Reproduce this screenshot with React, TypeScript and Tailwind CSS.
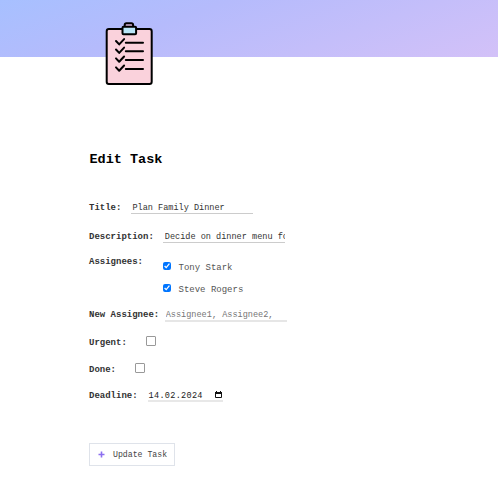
import React from 'react';

const label = 'shrink-0 whitespace-pre text-[9px] leading-[12px] font-bold text-[#333]';
const people = ['Tony Stark', 'Steve Rogers'];

function Clipboard() {
  return (
    <svg className="block h-[64px] w-[48px]" viewBox="0 0 48 64" fill="none" stroke="#000" strokeWidth="2" strokeLinecap="round" strokeLinejoin="round">
      <rect x="1.7" y="7" width="45" height="55" rx="2.2" fill="#fad2dc" />
      <path d="M19.7 5V3Q19.7 1.3 21.4 1.3H26.4Q28.1 1.3 28.1 3V5" fill="#d9b4d8" />
      <rect x="17.5" y="4.8" width="13.6" height="7.4" rx="1" fill="#b9e6f8" />
      {[0, 8.5, 17.4, 26.4].map((y) => (
        <path key={y} d={`M11 ${19 + y}l3.2 3.4 4.9-5.3M20.8 ${20.7 + y}H38`} />
      ))}
    </svg>
  );
}

export default function App() {
  return (
    <div className="h-[504px] w-[498px] overflow-hidden bg-white font-['Liberation_Mono','Courier_New',monospace]">
      <header className="h-[57px] bg-[linear-gradient(160deg,#a7c0ff_0%,#b5bbfc_35%,#d3c1f8_100%)] pt-[22px] pl-[105px]">
        <Clipboard />
      </header>
      <main className="pt-[95px] pl-[89px]">
        <h1 className="h-[16px] pl-[0.5px] text-[13.5px] leading-[16px] font-bold text-black">Edit Task</h1>
        <form>
          <div className="mt-[34px] flex h-[14px]">
            <label className={label}>Title:</label>
            <input className="ml-[9.5px] h-[12px] w-[122px] border-b border-[#ccc] pl-[1.5px] text-[8.55px] leading-[11px] text-[#333]" defaultValue="Plan Family Dinner" />
          </div>
          <div className="mt-[15px] flex h-[14px]">
            <label className={label}>Description:</label>
            <input className="ml-[9.5px] h-[12px] w-[122px] border-b border-[#ccc] pl-[1.5px] text-[8.55px] leading-[11px] text-[#333]" defaultValue="Decide on dinner menu for the family" />
          </div>
          <div className="mt-[11px] flex h-[41px]">
            <label className={label}>Assignees:</label>
            <div className="ml-[20px] flex flex-col gap-[10px] pt-[6px]">
              {people.map((p) => (
                <div key={p} className="flex h-[12px] text-[9px] leading-[12px] text-[#555]">
                  <input type="checkbox" defaultChecked className="m-0 h-[8px] w-[8px] accent-[#0075ff]" />
                  <span className="ml-[7.5px]">{p}</span>
                </div>
              ))}
            </div>
          </div>
          <div className="mt-[12px] flex h-[14px]">
            <label className={label}>New Assignee:</label>
            <input className="ml-[6px] h-[13px] w-[122px] border-b-2 border-[#e6e6e6] pl-[0.5px] text-[8.55px] leading-[11px] placeholder:text-[#757575]" placeholder="Assignee1, Assignee2," />
          </div>
          <div className="mt-[14px] flex h-[14px]">
            <label className={label}>Urgent:</label>
            <span className="ml-[19px] mt-[-1px] h-[10px] w-[10px] rounded-[1px] border border-[#999] bg-white" />
          </div>
          <div className="mt-[13px] flex h-[14px]">
            <label className={label}>Done:</label>
            <span className="ml-[19px] mt-[-1px] h-[10px] w-[10px] rounded-[1px] border border-[#999] bg-white" />
          </div>
          <div className="mt-[12px] flex h-[14px]">
            <label className={label}>Deadline:</label>
            <div className="ml-[10.5px] flex h-[12px] w-[75px] justify-between border-b-2 border-[#e8e8e8] pr-[1px] pl-[0.5px] text-[8.55px] leading-[12px] tracking-[0.28px] text-[#222]">
              <span>14.02.2024</span>
              <svg className="mt-[1px] h-[8px] w-[7px]" viewBox="0 0 7 8">
                <path d="M.5 1.5H6.5V6.5H.5Z" fill="none" stroke="#111" />
                <path d="M0 1H7V3H0ZM1 0H2V2H1ZM5 0H6V2H5Z" fill="#111" />
              </svg>
            </div>
          </div>
          <button type="button" className="mt-[39px] flex h-[23px] w-[86px] items-center border border-[#dfe3ea] bg-white pl-[8px] text-[8.2px] leading-[12px] text-[#444]">
            <svg className="h-[7px] w-[7px]" viewBox="0 0 7 7"><path d="M3.5 .5V6.5M.5 3.5H6.5" stroke="#8c6ff0" strokeWidth="1.6" /></svg>
            <span className="ml-[8px] whitespace-pre">Update Task</span>
          </button>
        </form>
      </main>
    </div>
  );
}
